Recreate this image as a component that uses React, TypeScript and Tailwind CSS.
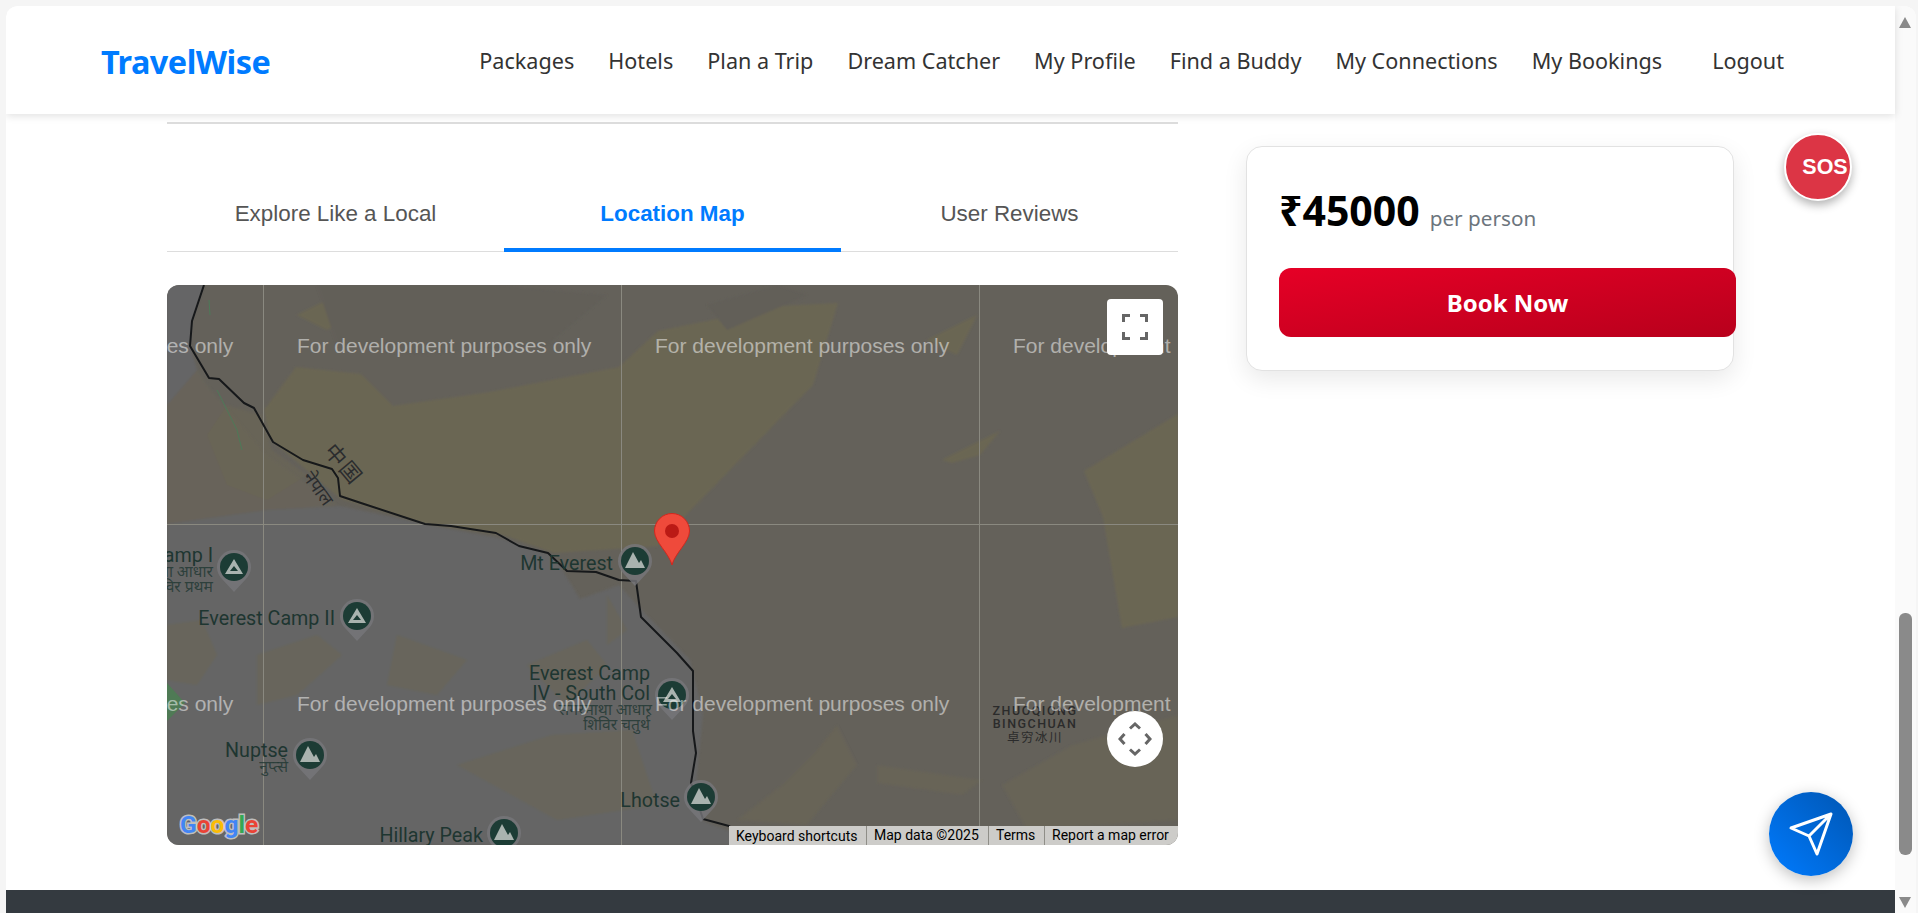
import React from 'react';

const navLinks = ['Packages', 'Hotels', 'Plan a Trip', 'Dream Catcher', 'My Profile', 'Find a Buddy', 'My Connections', 'My Bookings'];

const borderPath = 'M37 0 L25 36 L23 61 L42 93 L52 94 L77 118 L87 123 L106 157 L136 175 L165 184 L171 193 L173 211 L194 218 L258 239 L284 241 L329 248 L352 261 L381 268 L400 286 L429 287 L452 295 L469 296 L474 332 L510 368 L526 386 L526 446 L529 468 L524 498 L536 534 L562 541 L580 552';

const peaks = [
  { x: 67, y: 282, tent: true },
  { x: 190, y: 331, tent: true },
  { x: 468, y: 276, tent: false },
  { x: 505, y: 410, tent: true },
  { x: 143, y: 470, tent: false },
  { x: 534, y: 512, tent: false },
  { x: 337, y: 548, tent: false },
];

const labels = [
  { t: 'Everest Camp I', x: 46, y: 277, s: 19.7 },
  { t: 'Everest Camp II', x: 168, y: 340, s: 19.7 },
  { t: 'Mt Everest', x: 446, y: 285, s: 19.7 },
  { t: 'Everest Camp', x: 483, y: 395, s: 19.7 },
  { t: 'IV - South Col', x: 483, y: 415, s: 19.7 },
  { t: 'Nuptse', x: 121, y: 472, s: 19.7 },
  { t: 'Lhotse', x: 513, y: 522, s: 19.7 },
  { t: 'Hillary Peak', x: 316, y: 557, s: 19.7 },
  { t: 'सगरमाथा आधार', x: 46, y: 292, s: 15.7 },
  { t: 'शिविर प्रथम', x: 46, y: 307, s: 15.7 },
  { t: 'सगरमाथा आधार', x: 485, y: 430, s: 15.7 },
  { t: 'शिविर चतुर्थ', x: 483, y: 445, s: 15.7 },
  { t: 'नुप्त्से', x: 121, y: 487, s: 15.7 },
];

// olive patches in the map terrain, in map pixels
const olive = [
  'M97 125 L129 82 L194 89 L226 121 L323 107 L452 82 L491 46 L613 21 L671 18 L646 100 L520 229 L491 261 L387 268 L336 250 L258 239 L174 214 L103 154 Z',
  'M917 186 L1011 129 L1011 332 L955 343 L936 232 Z',
  'M775 175 L833 146 L813 170 L785 178 Z',
  'M0 0 L26 0 L20 30 L0 36 Z',
  'M130 30 L180 5 L230 0 L205 25 L160 45 Z',
  'M300 40 L350 15 L330 45 Z',
  'M760 55 L810 30 L790 70 Z',
];

const faintOlive = [
  'M60 120 L95 130 L105 165 L140 190 L100 215 L60 200 L40 150 Z',
  'M0 340 L35 335 L50 370 L30 400 L0 395 Z',
  'M90 370 L150 350 L175 370 L130 410 L90 420 Z',
  'M385 450 L465 445 L490 520 L390 535 L290 480 Z',
  'M360 380 L420 355 L440 380 L400 420 Z',
  'M570 535 L615 500 L650 465 L670 440 L690 480 L640 540 Z',
  'M710 480 L815 495 L795 510 L710 498 Z',
  'M835 500 L905 460 L1011 430 L1011 535 L860 545 Z',
  'M230 350 L300 375 L270 410 L220 400 Z',
  'M440 310 L460 345 L440 360 Z',
];

const greyPatches = [
  'M150 0 L330 0 L440 10 L380 60 L250 70 L170 60 Z',
  'M540 20 L610 0 L640 10 L560 45 Z',
];

const Peak = ({ x, y, tent }: { x: number; y: number; tent: boolean }) => (
  <g transform={`translate(${x} ${y})`}>
    <path d="M0 25 L-11.5 12.5 A17 17 0 1 1 11.5 12.5 Z" fill="#77777a" fillOpacity="0.8" />
    <circle r="14" fill="#1c3c35" />
    {tent ? (
      <path fillRule="evenodd" d="M0 -8 L9 7 L-9 7 Z M0 -1 L-4 4 L4 4 Z" fill="#a9b3af" />
    ) : (
      <path d="M-2 -9 L4 2 L6 -1 L10 7 L-10 7 Z" fill="#a9b3af" />
    )}
  </g>
);

const MapTiles = () => (
  <svg viewBox="0 0 1011 560" className="block h-full w-full">
    <defs>
      <filter id="soft">
        <feGaussianBlur stdDeviation="1.2" />
      </filter>
    </defs>
    <rect width="1011" height="560" fill="#64615a" />
    <g filter="url(#soft)">
      <path d="M0 36 L40 100 L100 170 L170 220 L0 240 Z" fill="#67645a" />
      {olive.map((d) => (
        <path key={d} d={d} fill="#6b6653" />
      ))}
      {greyPatches.map((d) => (
        <path key={d} d={d} fill="#625f59" />
      ))}
      <path d="M0 0 L37 0 L25 36 L23 61 L30 85 L0 120 Z" fill="#656566" />
      <path d="M0 239 L100 225 L174 221 L258 239 L336 254 L387 271 L413 314 L452 300 L471 321 L523 375 L536 429 L529 500 L536 536 L600 560 L0 560 Z" fill="#656565" />
      {faintOlive.map((d) => (
        <path key={d} d={d} fill="#6a6655" fillOpacity="0.6" />
      ))}
    </g>
    <path d="M0 398 L18 418 L0 436 Z" fill="#4f7a55" />
    {/* tile seams */}
    <g stroke="#8a8980" strokeWidth="1">
      <line x1="96.5" y1="0" x2="96.5" y2="560" />
      <line x1="454.5" y1="0" x2="454.5" y2="560" />
      <line x1="812.5" y1="0" x2="812.5" y2="560" />
      <line x1="0" y1="239.5" x2="1011" y2="239.5" />
    </g>
    <path d="M42 15 L43 30 M50 105 L70 145 L75 165" stroke="#4d7a58" strokeWidth="1" fill="none" />
    <path d={borderPath} stroke="#16181a" strokeWidth="2" fill="none" strokeLinejoin="round" />
    {peaks.map((p) => (
      <Peak key={`${p.x}-${p.y}`} x={p.x} y={p.y} tent={p.tent} />
    ))}
    <g fill="#1e3631" textAnchor="end" fontFamily="Roboto, 'Noto Sans', sans-serif">
      {labels.map((l) => (
        <text key={`${l.t}-${l.x}`} x={l.x} y={l.y} fontSize={l.s} fillOpacity={l.s < 18 ? 0.8 : 1}>{l.t}</text>
      ))}
    </g>
    <g fill="#2a2c2e" fontFamily="'Noto Sans CJK SC', sans-serif" textAnchor="middle">
      <text transform="translate(171 184) rotate(50)" fontSize="21" letterSpacing="2">中国</text>
      <text transform="translate(146 207) rotate(55)" fontSize="18" fontFamily="Roboto, sans-serif">नेपाल</text>
    </g>
    <g fill="#2b2b2b" textAnchor="middle" fontFamily="Roboto, sans-serif" fontSize="12.5" fontWeight="500" letterSpacing="1.5">
      <text x="868" y="430">ZHUOQIONG</text>
      <text x="868" y="443">BINGCHUAN</text>
      <text x="868" y="457" fontFamily="'Noto Sans CJK SC', sans-serif" fontWeight="400">卓穷冰川</text>
    </g>
    <g fill="#ffffff" fillOpacity="0.5" fontFamily="'Liberation Sans', Arial, sans-serif" fontSize="21">
      <text x="-228" y="68">For development purposes only</text>
      <text x="130" y="68">For development purposes only</text>
      <text x="488" y="68">For development purposes only</text>
      <text x="846" y="68">For development</text>
      <text x="-228" y="426">For development purposes only</text>
      <text x="130" y="426">For development purposes only</text>
      <text x="488" y="426">For development purposes only</text>
      <text x="846" y="426">For development</text>
    </g>
    {/* selected pin */}
    <g transform="translate(505 246)">
      <path d="M0 34 C-3 22 -17.5 11 -17.5 0 A17.5 17.5 0 0 1 17.5 0 C17.5 11 3 22 0 34 Z" fill="#ef4a3b" stroke="#d0281f" strokeWidth="1" />
      <circle r="7" fill="#bb1a15" />
    </g>
    <text x="13" y="548" fontFamily="Roboto, 'Liberation Sans', sans-serif" fontSize="24.5" fontWeight="700" stroke="#d8d8d8" strokeWidth="3" paintOrder="stroke" strokeOpacity="0.8">
      <tspan fill="#4285f4">G</tspan>
      <tspan fill="#ea4335">o</tspan>
      <tspan fill="#fbbc05">o</tspan>
      <tspan fill="#4285f4">g</tspan>
      <tspan fill="#34a853">l</tspan>
      <tspan fill="#ea4335">e</tspan>
    </text>
  </svg>
);

const LocationMap = () => (
  <div className="relative h-[560px] w-[1011px] overflow-hidden rounded-xl">
    <MapTiles />
    <button className="absolute right-[15px] top-[14px] flex h-14 w-14 items-center justify-center rounded-sm bg-white">
      <svg width="26" height="26" viewBox="0 0 26 26" fill="none" stroke="#666666" strokeWidth="3">
        <path d="M1.5 8 V1.5 H8 M18 1.5 H24.5 V8 M24.5 18 V24.5 H18 M8 24.5 H1.5 V18" />
      </svg>
    </button>
    <button className="absolute bottom-[78px] right-[15px] flex h-14 w-14 items-center justify-center rounded-full bg-white">
      <svg width="34" height="34" viewBox="0 0 34 34" fill="none" stroke="#666666" strokeWidth="3">
        <path d="M12 6.5 L17 2 L22 6.5 M12 27.5 L17 32 L22 27.5 M6.5 12 L2 17 L6.5 22 M27.5 12 L32 17 L27.5 22" />
      </svg>
    </button>
    <div className="absolute bottom-0 right-0 flex h-[19px] items-center whitespace-nowrap bg-[#cdccc9] font-['Roboto',sans-serif] text-[14px] leading-none text-black">
      <span className="w-[137px] pl-[7px]">Keyboard shortcuts</span>
      <span className="w-[122px] border-l border-[#8f8e88] pl-[7px] leading-[19px]">Map data ©2025</span>
      <span className="w-[56px] border-l border-[#8f8e88] pl-[7px] leading-[19px]">Terms</span>
      <span className="w-[134px] border-l border-[#8f8e88] pl-[7px] leading-[19px]">Report a map error</span>
    </div>
  </div>
);

export default function App() {
  return (
    <div className="relative h-[913px] w-full overflow-hidden bg-[#f5f5f5] pl-1.5 pr-0.5 pt-1.5 font-['Noto_Sans',sans-serif]">
      <div className="flex h-full overflow-hidden rounded-t-xl bg-white">
        <div className="flex min-w-0 flex-1 flex-col">
          <header className="relative z-10 flex h-[108px] shrink-0 items-center justify-between bg-white pb-px pl-[95px] pr-[111px] pt-[3px] shadow-[0_2px_8px_rgba(0,0,0,0.12)]">
            <span className="text-[32.4px] font-bold leading-none tracking-[-0.5px] text-[#007bff]">TravelWise</span>
            <nav className="flex items-center gap-[34px] text-[21.6px] leading-none text-[#333333]">
              {navLinks.map((link) => (
                <a key={link}>{link}</a>
              ))}
              <a className="ml-4">Logout</a>
            </nav>
          </header>
          <main className="flex min-h-0 flex-1 pl-[161px]">
            <section className="w-[1011px] shrink-0 pt-2">
              <div className="h-0.5 bg-[#dddddd]" />
              <div className="mt-[72px] grid h-14 grid-cols-3 border-b border-[#dddddd] font-['Liberation_Sans',Arial,sans-serif] text-[22.4px] leading-9 text-[#555555]">
                <div className="text-center">Explore Like a Local</div>
                <div className="h-14 border-b-4 border-[#007bff] text-center font-bold text-[#007bff]">Location Map</div>
                <div className="text-center">User Reviews</div>
              </div>
              <div className="mt-[33px]">
                <LocationMap />
              </div>
            </section>
            <aside className="ml-[68px] mt-8 h-[225px] w-[488px] shrink-0 rounded-2xl border border-[#e2e2e2] bg-white pl-8 pt-[43px] shadow-[0_8px_24px_rgba(0,0,0,0.09)]">
              <div className="flex items-baseline gap-2.5">
                <span className="text-[41px] font-bold leading-none text-black">₹45000</span>
                <span className="text-[20.7px] leading-none text-[#6c757d]">per person</span>
              </div>
              <button className="mt-[37px] flex h-[69px] w-[457px] items-center justify-center rounded-xl bg-gradient-to-br from-[#e60026] to-[#b8001c] text-[24px] font-bold text-white">
                Book Now
              </button>
            </aside>
          </main>
          <footer className="h-[23px] shrink-0 bg-[#343a40]" />
        </div>
        <div className="relative w-[21px] shrink-0 bg-[#fafafa]">
          <div className="absolute left-1 top-[11px] h-0 w-0 border-x-[6.5px] border-b-[11px] border-x-transparent border-b-[#8a8a8a]" />
          <div className="absolute left-1 top-[607px] h-[242px] w-[13px] rounded-md bg-[#8a8a8a]" />
          <div className="absolute bottom-[5px] left-1 h-0 w-0 border-x-[6.5px] border-t-[11px] border-x-transparent border-t-[#8a8a8a]" />
        </div>
      </div>
      <button className="absolute left-[1784px] top-[133px] flex h-[68px] w-[68px] items-center justify-center rounded-full border-2 border-white bg-[#dc3545] pl-3.5 font-['Liberation_Sans',sans-serif] text-[21.5px] font-bold text-white shadow-[0_4px_10px_rgba(0,0,0,0.3)]">
        SOS
      </button>
      <button className="absolute left-[1769px] top-[792px] flex h-[84px] w-[84px] items-center justify-center rounded-full bg-gradient-to-tr from-[#007bff] to-[#0056b3] shadow-[0_4px_15px_rgba(0,0,0,0.25)]">
        <svg width="48" height="48" viewBox="0 0 24 24" fill="none" stroke="#ffffff" strokeWidth="1.5" strokeLinecap="round" strokeLinejoin="round">
          <path d="M22 2 L11 13 M22 2 L15 22 L11 13 L2 9 Z" />
        </svg>
      </button>
    </div>
  );
}
